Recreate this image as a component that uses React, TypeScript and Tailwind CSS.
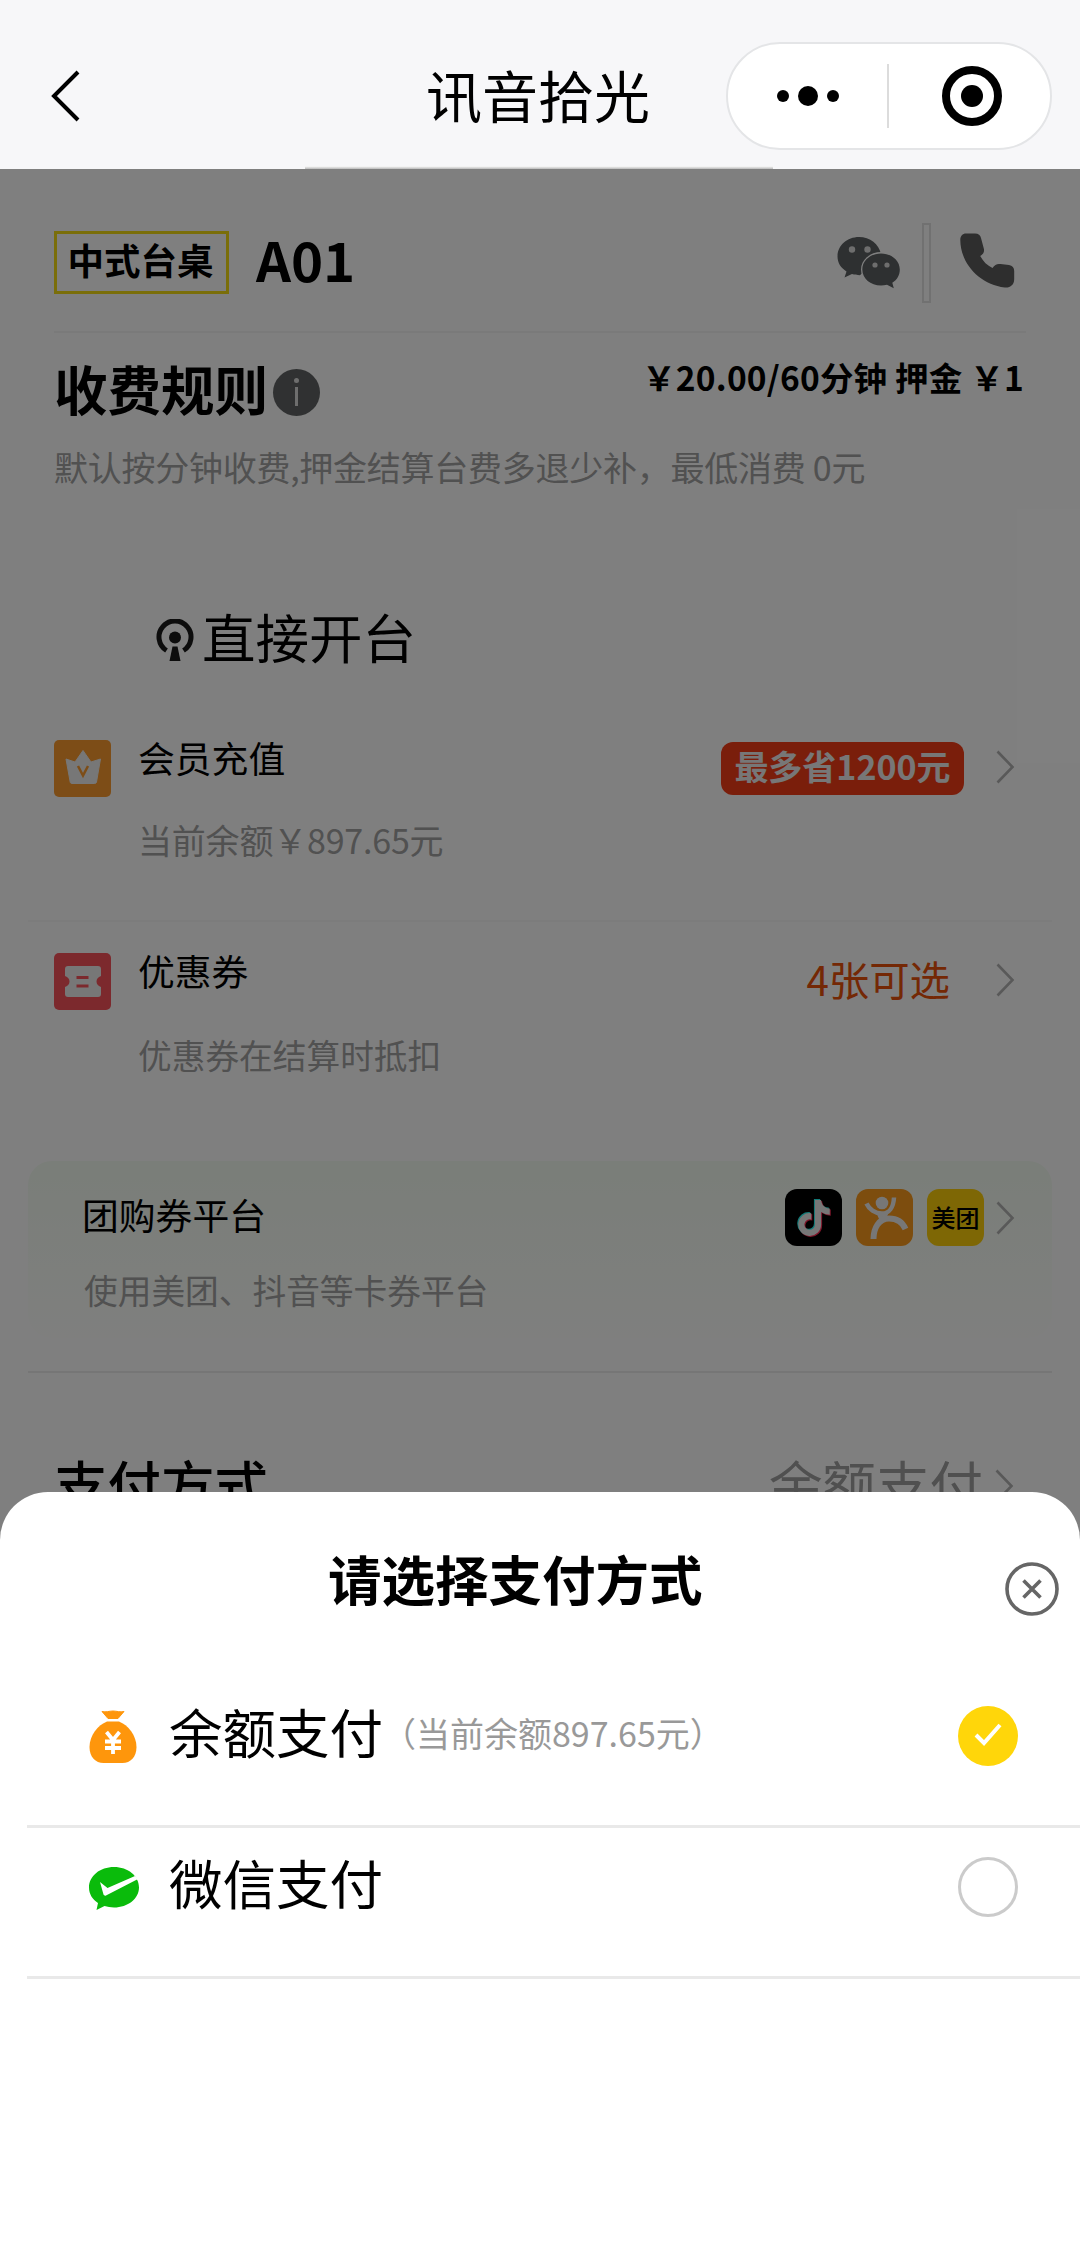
import type { ReactNode } from "react";
import { FaTiktok } from "react-icons/fa6";

function Chevron({ className = "" }: { className?: string }) {
  return (
    <svg className={"h-[34px] w-[19px] shrink-0 " + className} viewBox="0 0 19 34" fill="none" stroke="#b2b2b2" strokeWidth="2.6">
      <path d="M1.500 1.500 L16.500 17 L1.500 32.500" />
    </svg>
  );
}

function WechatIcon() {
  return (
    <svg className="h-[53px] w-[65px]" viewBox="0 0 65 53">
      <path fill="#5c6062" d="M22 1C10 1 .5 9.500.5 20.500c0 6.500 3.500 11.500 9 15L7.500 41.500l7.500-3.500c2.500.8 5 1.200 8 1.200L44 18C42 8 33 1 22 1z" />
      <ellipse cx="44" cy="33.500" rx="20" ry="17.500" fill="#fff" />
      <path fill="#5c6062" d="M44 17.500c-10.500 0-18.700 7-18.700 16s8.200 16 18.700 16c2 0 4-.2 6-.8l6.800 3.500-1.500-5.500c5-3 7.500-7.700 7.500-13.200 0-9-8.300-16-18.800-16z" />
      <g fill="#ddd">
        <circle cx="15" cy="13.500" r="3.200" />
        <circle cx="30.500" cy="13.500" r="3.200" />
        <circle cx="38" cy="29" r="2.600" />
        <circle cx="50" cy="29" r="2.600" />
      </g>
    </svg>
  );
}

function PhoneIcon() {
  return (
    <svg className="h-[55px] w-[55px]" viewBox="0 0 55 55" fill="#5c5c5c">
      <path d="M6 .5H15c3.500 0 5.300 1.500 6 4.500l2.800 10.500c.8 3.500-.3 5.500-3.600 7.500 3 5.500 7 9.500 12.300 12 2.300-3.500 4.500-4.500 8-4l8.500 1c3.500.6 5.200 2.500 5.200 6V46c0 6-4 9-9.500 8.500C20 51.500.5 31 .3 7 .3 3 2.500.5 6 .5z" />
    </svg>
  );
}

function BroadcastIcon() {
  return (
    <svg className="h-[42px] w-[38px]" viewBox="0 0 38 42">
      <path d="M10.500 31.500A16 16 0 1 1 27.500 31.500" fill="none" stroke="#1a1a1a" strokeWidth="5" />
      <circle cx="19" cy="18.500" r="6" fill="#1a1a1a" />
      <path d="M16.500 27.500h5l3 14.500h-11z" fill="#1a1a1a" />
    </svg>
  );
}

function CrownIcon() {
  return (
    <svg className="h-[57px] w-[57px]" viewBox="0 0 57 57">
      <rect width="57" height="57" rx="5" fill="#fa9b2f" />
      <path d="M12 19l9 3 8-11.500 8 11.500 9.500-3-4 23c-.2 1-1 1.500-2 1.500H18c-1 0-1.600-.5-1.800-1.500z" fill="#eee" stroke="#eee" strokeLinejoin="round" />
      <path d="M24 26l5 9.500 5-9.500" fill="none" stroke="#fa9b2f" strokeWidth="2.500" />
    </svg>
  );
}

function CouponIcon() {
  return (
    <svg className="h-[57px] w-[57px]" viewBox="0 0 57 57">
      <rect width="57" height="57" rx="5" fill="#f9525a" />
      <path d="M14 13h30c2 0 3 1 3 3v7c-3 1-4.500 3-4.500 5.500S44 33 47 34v7c0 2-1 3-3 3H14c-2 0-3-1-3-3v-7c3-1 4.500-3 4.500-5.500S14 24 11 23v-7c0-2 1-3 3-3z" fill="#eee" />
      <path d="M22.500 24.500h12M22.500 33h12" stroke="#f9525a" strokeWidth="2.800" />
    </svg>
  );
}

function DianpingIcon() {
  return (
    <svg className="h-[57px] w-[57px] rounded-[12px] bg-[#fb9a1c]" viewBox="0 0 57 57" fill="none" stroke="#eee">
      <circle cx="26" cy="14" r="6.300" fill="#eee" stroke="none" />
      <path d="M10.500 14.500C13 20 19 24.500 26 24.500c7 0 11.500-6 12-16" strokeWidth="4.500" />
      <path d="M20 23h13l-4 9-8 7 2-9z" fill="#eee" stroke="none" />
      <path d="M17.500 50C17.500 39 23 29.500 33 29.500c8 0 13.500 3.500 16.500 10.500" strokeWidth="6" />
    </svg>
  );
}

function MoneyBag() {
  return (
    <svg className="h-[54px] w-[50px]" viewBox="0 0 50 54">
      <path d="M14 1.500c4 1 7-.5 11-.5s7 1.500 11 .5L30 8.500H20z" fill="#fe960c" stroke="#fe960c" strokeLinejoin="round" />
      <path d="M19 11.500h12c9 3.500 17.500 14 17.500 25.500 0 10-6 16-14 16h-19C7.500 53 1.500 47 1.500 37 1.500 25.500 10 15 19 11.500z" fill="#fe960c" />
      <path d="M18.500 22l6.500 8 6.500-8M17 31.500h16M17 38h16M25 30v14" fill="none" stroke="#fff" strokeWidth="3.800" />
    </svg>
  );
}

function WechatPayIcon() {
  return (
    <svg className="h-[45px] w-[52px]" viewBox="0 0 52 45">
      <path d="M26 1C12 1 1 10 1 21.500 1 28 4.500 33.500 10 37l-1.500 7 8-4c3 .9 6 1.400 9.500 1.400 14 0 25-9 25-20C51 10 40 1 26 1z" fill="#0abb0b" />
      <path d="M12 16l7.500 6L47 10l3 3-32 16.500c-1 .5-2 0-2.500-1z" fill="#fff" />
    </svg>
  );
}

function PayRow({ icon, name, note, radio }: { icon: ReactNode; name: string; note?: string; radio: ReactNode }) {
  return (
    <div className="ml-[27px] flex h-[151px] items-center border-b-[3px] border-[#e9e9e9] pr-[62px] pl-[61px]">
      <div className="-mt-[30px] flex w-full items-center">
        <div className="mt-[2px] flex w-[81px]">{icon}</div>
        <span className="-mt-[11px] text-[53.500px] leading-[70px]">{name}</span>
        {note && <span className="-mt-[8px] -ml-px text-[34px] text-[#999]">{note}</span>}
        <div className="ml-auto">{radio}</div>
      </div>
    </div>
  );
}

export default function App() {
  return (
    <div className="relative h-[2263px] w-[1080px] overflow-hidden bg-white font-['Noto_Sans_CJK_SC',sans-serif] text-black">
      <header className="relative flex h-[169px] items-center bg-[#f7f7f9] pt-[23px] pr-[28px] pl-[51px]">
        <svg className="h-[52px] w-[30px]" viewBox="0 0 30 52" fill="none" stroke="#000" strokeWidth="4">
          <path d="M27 2L3 26l24 24" />
        </svg>
        <h1 className="mt-[-4px] ml-[345px] text-[56px] leading-[70px]">讯音拾光</h1>
        <div className="ml-auto flex h-[108px] w-[326px] items-center rounded-full border-2 border-[#e4e5e7] bg-white">
          <div className="flex w-[159px] items-center justify-center gap-[9px]">
            <i className="size-[12px] rounded-full bg-black" />
            <i className="size-[20px] rounded-full bg-black" />
            <i className="size-[12px] rounded-full bg-black" />
          </div>
          <div className="h-[64px] w-[2px] bg-[#dcdcdc]" />
          <div className="ml-[53px] flex size-[60px] items-center justify-center rounded-full border-[8px] border-black">
            <i className="size-[22px] rounded-full bg-black" />
          </div>
        </div>
        <div className="absolute bottom-0 left-[305px] h-[3px] w-[468px] bg-linear-to-b from-white to-[#b9b9b9]" />
      </header>

      <main className="relative h-[1400px] bg-white">
        <div className="mx-[54px] flex h-[164px] items-center border-b-2 border-[#f4f4f4] pt-[25px]">
          <div className="flex h-[63px] w-[175px] items-center justify-center border-[3px] border-[#f5dc14] pr-[2px] pb-[5px] text-[36.500px] leading-[50px] font-bold">中式台桌</div>
          <div className="mt-[-8px] ml-[27px] text-[54.500px] leading-[60px] font-bold">A01</div>
          <div className="ml-auto flex items-center pr-[11px]">
            <WechatIcon />
            <div className="ml-[20px] h-[80px] w-[9px] border-2 border-[#e2e2e2]" />
            <div className="mt-[-4px] ml-[29px]"><PhoneIcon /></div>
          </div>
        </div>

        <div className="mx-[54px] flex h-[113px] items-start justify-between">
          <div className="flex items-center pt-[18px]">
            <h2 className="text-[53.500px] leading-[74px] font-bold">收费规则</h2>
            <div className="mt-[8px] ml-[5px] flex size-[47px] flex-col items-center justify-center gap-[4px] rounded-full bg-[#606364]">
              <i className="size-[5px] rounded-full bg-[#ddd]" />
              <i className="h-[19px] w-[3px] bg-[#ddd]" />
            </div>
          </div>
          <div className="pt-[21px] pr-[2px] text-[33.500px] leading-[46px] font-bold tracking-[0.2px]">￥20.00/60分钟 押金 ￥1</div>
        </div>
        <p className="mx-[54px] mt-[-2px] text-[34px] leading-[46px] tracking-[-0.26px] text-[#a2a2a2]">默认按分钟收费,押金结算台费多退少补，最低消费 0元</p>

        <div className="mt-[115px] ml-[156px] flex h-[70px] items-center">
          <BroadcastIcon />
          <span className="-mt-[8px] ml-[8px] text-[53.500px] leading-[70px]">直接开台</span>
        </div>

        <section className="mx-[28px] mt-[64px] flex h-[183px] items-start border-b-2 border-[#f8f8f8] pl-[26px]">
          <div className="pt-[1px]"><CrownIcon /></div>
          <div className="ml-[27px]">
            <div className="mt-[-6px] text-[36.800px] leading-[48px]">会员充值</div>
            <div className="mt-[36px] text-[34px] leading-[46px] tracking-[-0.2px] text-[#a2a2a2]">当前余额￥897.65元</div>
          </div>
          <div className="ml-auto flex items-start pt-[3px] pr-[37px]">
            <div className="mr-[32px] flex h-[53px] w-[243px] items-center justify-center rounded-[12px] bg-[#f53c17] pb-[6px] text-[34px] font-bold text-[#eee]">最多省1200元</div>
            <Chevron className="mt-[8px]" />
          </div>
        </section>

        <section className="mx-[28px] mt-[30px] flex h-[209px] items-start pl-[26px]">
          <div className="pt-[1px]"><CouponIcon /></div>
          <div className="ml-[27px]">
            <div className="mt-[-6px] text-[36.800px] leading-[48px]">优惠券</div>
            <div className="mt-[38px] text-[33.700px] leading-[46px] text-[#a2a2a2]">优惠券在结算时抵扣</div>
          </div>
          <div className="ml-auto flex items-start pr-[37px]">
            <div className="mr-[46px] text-[40.400px] leading-[54px] text-[#e8500a]">4张可选</div>
            <Chevron className="mt-[11px]" />
          </div>
        </section>

        <section className="mx-[28px] flex h-[177px] items-start rounded-[24px] bg-linear-to-b from-[#f4fcf2] to-[#fefffd] pl-[54px]">
          <div className="pt-[29px]">
            <div className="text-[36.800px] leading-[48px]">团购券平台</div>
            <div className="mt-[29px] pl-[2px] text-[33.700px] leading-[46px] text-[#a2a2a2]">使用美团、抖音等卡券平台</div>
          </div>
          <div className="ml-auto flex items-center pt-[28px] pr-[37px]">
            <div className="relative size-[57px] rounded-[12px] bg-black">
              <FaTiktok className="absolute top-[10px] left-[10px] size-[36px] text-[#25f4ee]" />
              <FaTiktok className="absolute top-[12px] left-[12px] size-[36px] text-[#fe2c55]" />
              <FaTiktok className="absolute top-[11px] left-[11px] size-[36px] text-[#eee]" />
            </div>
            <div className="ml-[14px]"><DianpingIcon /></div>
            <div className="ml-[14px] flex size-[57px] items-center justify-center rounded-[12px] bg-[#fccf0a] pb-[1px] text-[24px] leading-none font-medium">
              美团
            </div>
            <Chevron className="ml-[12px]" />
          </div>
        </section>
        <div className="mx-[28px] mt-[33px] h-[2px] bg-[#ececec]" />

        <div className="mt-[75px] flex h-[70px] items-center pr-[66px] pl-[54px]">
          <span className="text-[53.500px] leading-[70px] font-medium">支付方式</span>
          <span className="ml-auto text-[53.500px] leading-[70px] text-[#a0a0a0]">余额支付</span>
          <Chevron className="mt-[6px] ml-[12px]" />
        </div>
        <div className="absolute inset-0 bg-black/50" />
      </main>

      <div role="dialog" className="absolute inset-x-0 top-[1492px] bottom-0 rounded-t-[48px] bg-white">
        <div className="flex h-[185px] items-center pr-[21px] pl-[328px]">
          <h2 className="mt-[-13px] text-[53.500px] leading-[70px] font-bold">请选择支付方式</h2>
          <svg className="mt-[9px] ml-auto size-[54px]" viewBox="0 0 54 54" fill="none" stroke="#666" strokeWidth="3.600">
            <circle cx="27" cy="27" r="25" />
            <path d="M18.500 18.500l17 17M35.500 18.500l-17 17" />
          </svg>
        </div>
        <PayRow
          icon={<MoneyBag />}
          name="余额支付"
          note="（当前余额897.65元）"
          radio={
            <svg className="size-[60px]" viewBox="0 0 60 60" fill="none">
              <circle cx="30" cy="30" r="30" fill="#ffd60a" />
              <path d="M18 29l8 8 16-18" stroke="#fff" strokeWidth="4" />
            </svg>
          }
        />
        <PayRow
          icon={<WechatPayIcon />}
          name="微信支付"
          radio={<div className="size-[60px] rounded-full border-[3px] border-[#cbcbcb]" />}
        />
      </div>
    </div>
  );
}
